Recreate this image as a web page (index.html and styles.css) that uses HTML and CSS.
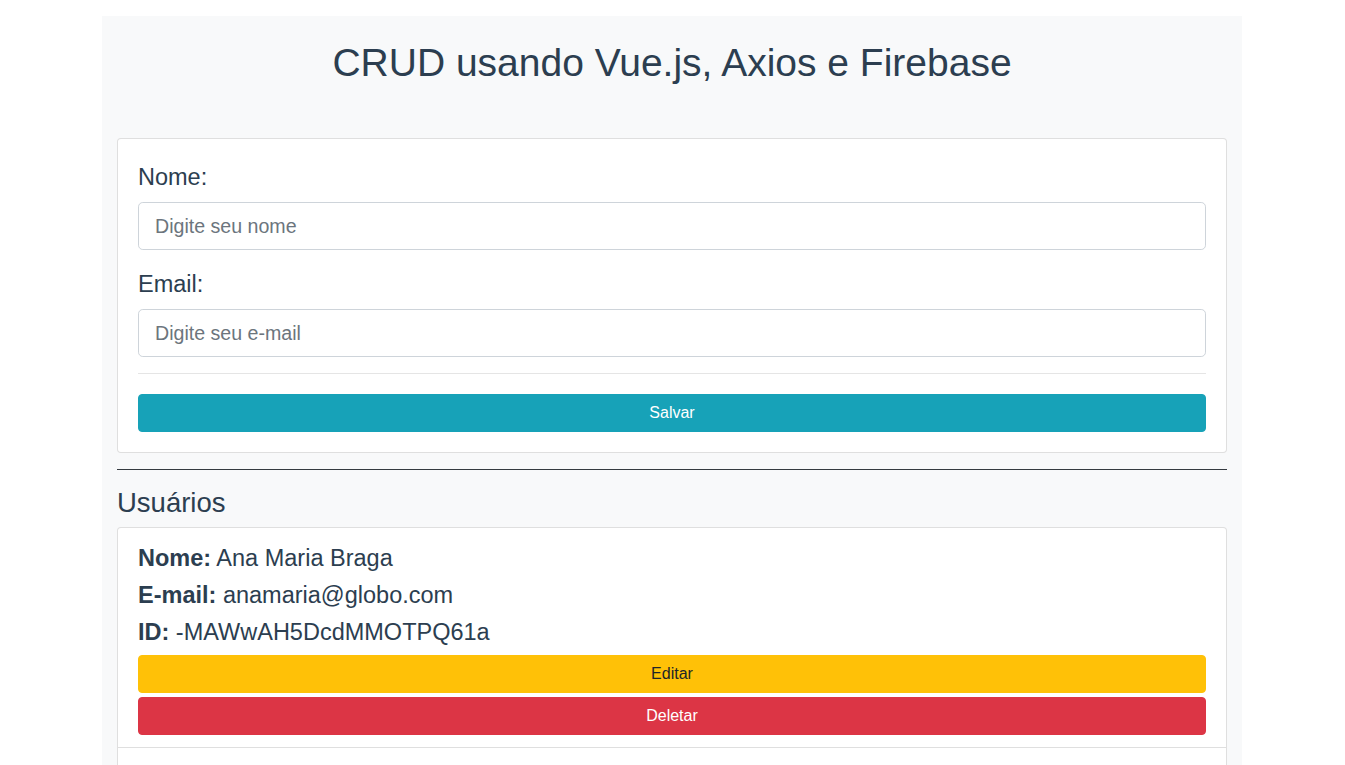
FILE: index.html
```html
<!DOCTYPE html>
<html lang="pt-BR">
<head>
<meta charset="utf-8">
<title>CRUD usando Vue.js, Axios e Firebase</title>
<link rel="stylesheet" href="styles.css">
</head>
<body>
<div class="container">
  <h1 class="title">CRUD usando Vue.js, Axios e Firebase</h1>
  <div class="card">
    <div class="card-body">
      <div class="form-group">
        <label class="label" for="nome">Nome:</label>
        <input class="input" id="nome" type="text" placeholder="Digite seu nome">
      </div>
      <div class="form-group">
        <label class="label" for="email">Email:</label>
        <input class="input" id="email" type="text" placeholder="Digite seu e-mail">
      </div>
      <hr class="sep">
      <button class="btn btn-info">Salvar</button>
    </div>
  </div>
  <hr class="divider">
  <h3 class="section-title">Usuários</h3>
  <ul class="list">
    <li class="list-item">
      <div class="line"><strong>Nome:</strong> Ana Maria Braga</div>
      <div class="line"><strong>E-mail:</strong> anamaria@globo.com</div>
      <div class="line"><strong>ID:</strong> -MAWwAH5DcdMMOTPQ61a</div>
      <div class="actions">
        <button class="btn btn-warning">Editar</button>
        <button class="btn btn-danger">Deletar</button>
      </div>
    </li>
    <li class="list-item list-item-next">
      <div class="line"><strong>Nome:</strong> Fausto Silva</div>
      <div class="line"><strong>E-mail:</strong> faustao@globo.com</div>
      <div class="line"><strong>ID:</strong> -MAWwQx7KfjLpRTZb02c</div>
      <div class="actions">
        <button class="btn btn-warning">Editar</button>
        <button class="btn btn-danger">Deletar</button>
      </div>
    </li>
  </ul>
</div>
</body>
</html>
```
FILE: styles.css
```css
* { box-sizing: border-box; }
html, body { margin: 0; padding: 0; background: #fff; }
body {
  padding-right: 1px;
  font-family: "Liberation Sans", Arial, Helvetica, sans-serif;
  color: #2c3e50;
  font-size: 16px;
  line-height: 1.5;
}
.container {
  width: 1140px;
  margin: 16px auto 0;
  padding: 23px 15px 20px;
  background: #f8f9fa;
  min-height: 760px;
}
.title {
  margin: 0 0 51px;
  font-size: 39px;
  font-weight: 400;
  line-height: 48px;
  text-align: center;
}
.card {
  background: #fff;
  border: 1px solid rgba(0,0,0,.125);
  border-radius: 4px;
}
.card-body { padding: 20px; }
.form-group { margin-bottom: 16px; }
.label {
  display: block;
  font-size: 23.5px;
  line-height: 36px;
  margin-bottom: 7px;
}
.input {
  display: block;
  width: 100%;
  height: 48px;
  padding: 8px 16px;
  font-family: inherit;
  font-size: 19.6px;
  line-height: 30px;
  color: #495057;
  background: #fff;
  border: 1px solid #ced4da;
  border-radius: 4.8px;
  outline: none;
}
.input::placeholder { color: #6c757d; opacity: 1; }
.sep {
  margin: 0 0 20px;
  border: 0;
  border-top: 1px solid rgba(0,0,0,.1);
  height: 0;
}
.btn {
  display: block;
  width: 100%;
  height: 38px;
  padding: 6px 12px;
  font-family: inherit;
  font-size: 16px;
  line-height: 24px;
  font-weight: 400;
  text-align: center;
  border: 1px solid transparent;
  border-radius: 4px;
  cursor: pointer;
}
.btn-info { background: #17a2b8; border-color: #17a2b8; color: #fff; }
.btn-warning { background: #ffc107; border-color: #ffc107; color: #212529; }
.btn-danger { background: #dc3545; border-color: #dc3545; color: #fff; }
.divider {
  margin: 16px 0;
  border: 0;
  border-top: 1px solid #343a40;
  height: 0;
}
.section-title {
  margin: 0 0 8px;
  font-size: 27.5px;
  font-weight: 400;
  line-height: 33px;
}
.list {
  list-style: none;
  margin: 0;
  padding: 0;
  background: #fff;
  border: 1px solid rgba(0,0,0,.125);
  border-radius: 4px;
}
.list-item {
  padding: 12px 20px;
  border-top: 1px solid rgba(0,0,0,.125);
}
.list-item:first-child { border-top: 0; }
.list-item-next { padding-top: 16px; }
.line {
  font-size: 23.5px;
  line-height: 37px;
}
.line strong { font-weight: 700; }
.actions {
  display: flex;
  flex-direction: column;
  gap: 4px;
  margin-top: 4px;
}
```
